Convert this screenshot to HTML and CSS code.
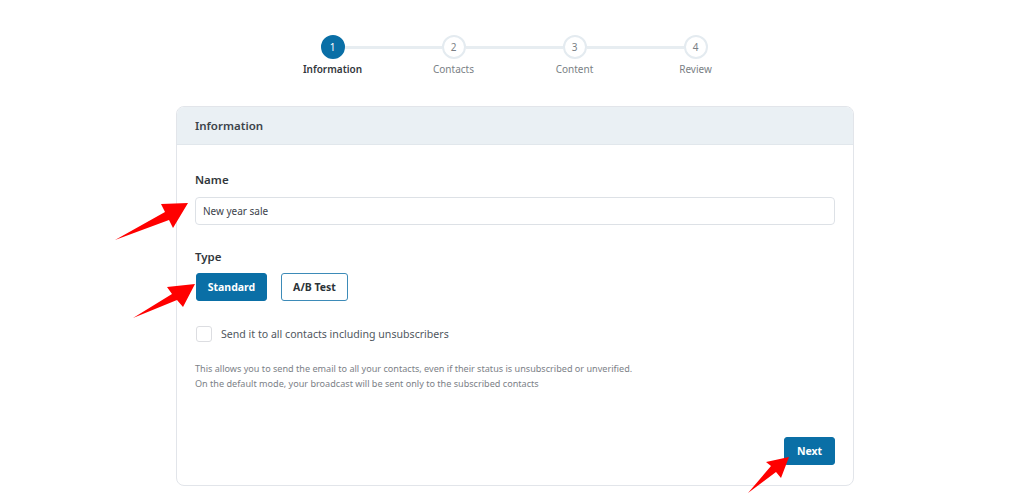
FILE: index.html
```html
<!DOCTYPE html>
<html lang="en">
<head>
<meta charset="utf-8">
<title>New broadcast</title>
<link rel="stylesheet" href="styles.css">
</head>
<body>
<div class="page">
  <ol class="steps">
    <li class="step active"><span class="dot">1</span><span class="step-label">Information</span></li>
    <li class="step"><span class="dot">2</span><span class="step-label">Contacts</span></li>
    <li class="step"><span class="dot">3</span><span class="step-label">Content</span></li>
    <li class="step"><span class="dot">4</span><span class="step-label">Review</span></li>
  </ol>

  <section class="card">
    <header class="card-head">Information</header>
    <div class="card-body">
      <label class="field-label">Name</label>
      <div class="input">New year sale</div>

      <div class="field-label type-label">Type</div>
      <div class="type-buttons">
        <button class="btn btn-primary">Standard</button>
        <button class="btn btn-outline">A/B Test</button>
      </div>

      <div class="check-row">
        <span class="checkbox"></span>
        <span class="check-label">Send it to all contacts including unsubscribers</span>
      </div>

      <p class="help">This allows you to send the email to all your contacts, even if their status is unsubscribed or unverified.<br>On the default mode, your broadcast will be sent only to the subscribed contacts</p>

      <div class="actions">
        <button class="btn btn-primary btn-next">Next</button>
      </div>
    </div>
  </section>

  <svg class="arrows" width="1024" height="493" viewBox="0 0 1024 493" aria-hidden="true">
    <polygon fill="#ff0000" points="115,240 165,212 161,204 188,203 173,228 169,220"/>
    <polygon fill="#ff0000" points="133,318 172,294 167,287 195,284 183,307 177,300"/>
    <polygon fill="#ff0000" points="748,493 771,466 766,462 789,457 781,478 776,472"/>
  </svg>
</div>
</body>
</html>
```

FILE: styles.css
```css
* { box-sizing: border-box; }

html, body {
  margin: 0;
  padding: 0;
  background: #ffffff;
}

body {
  font-family: "Noto Sans", "Open Sans", sans-serif;
  color: #3c434a;
  overflow: hidden;
}

.page {
  position: relative;
  width: 1024px;
  height: 493px;
  padding-top: 35px;
}

/* Stepper */
.steps {
  list-style: none;
  margin: 0 0 0 272px;
  padding: 0;
  display: flex;
  width: 484px;
}

.step {
  position: relative;
  width: 121px;
  display: flex;
  flex-direction: column;
  align-items: center;
}

.step + .step::before {
  content: "";
  position: absolute;
  top: 11px;
  left: calc(-50% + 12px);
  width: calc(100% - 24px);
  height: 3px;
  background: #e7edf1;
}

.dot {
  width: 24px;
  height: 24px;
  border-radius: 50%;
  border: 2px solid #e4ebf0;
  background: #fff;
  color: #7a7f85;
  font-size: 10px;
  line-height: 20px;
  text-align: center;
}

.step.active .dot {
  background: #0a6fa6;
  border-color: #0a6fa6;
  color: #fff;
}

.step-label {
  margin-top: 3px;
  font-size: 10px;
  line-height: 14px;
  color: #7a7f85;
  white-space: nowrap;
}

.step.active .step-label {
  color: #32373c;
  font-weight: 600;
}

/* Card */
.card {
  margin: 30px 0 0 176px;
  width: 678px;
  border: 1px solid #e2e5ea;
  border-radius: 8px;
  overflow: hidden;
  background: #fff;
}

.card-head {
  height: 38px;
  padding: 0 18px;
  background: #eaf0f4;
  border-bottom: 1px solid #e1e7ec;
  display: flex;
  align-items: center;
  font-size: 11.5px;
  font-weight: 600;
  color: #3c434a;
}

.card-body {
  padding: 27px 18px 20px 18px;
}

.field-label {
  display: block;
  font-size: 11.5px;
  font-weight: 600;
  line-height: 16px;
  color: #32373c;
}

.input {
  margin-top: 9px;
  height: 28px;
  border: 1px solid #dde1e6;
  border-radius: 4px;
  padding: 0 7px;
  display: flex;
  align-items: center;
  font-size: 10px;
  color: #3c434a;
}

.type-label {
  margin-top: 24px;
}

.type-buttons {
  margin-top: 8px;
  display: flex;
  gap: 14px;
  padding-left: 1px;
}

.btn {
  height: 28px;
  border-radius: 3px;
  font-family: inherit;
  font-size: 10.5px;
  font-weight: 700;
  padding: 0;
  cursor: pointer;
}

.btn-primary {
  background: #0a6fa6;
  border: 1px solid #0a6fa6;
  color: #fff;
  width: 71px;
}

.btn-outline {
  background: #fff;
  border: 1px solid #3d8bb8;
  color: #2c3338;
  width: 67px;
}

.check-row {
  margin-top: 25px;
  display: flex;
  align-items: center;
  padding-left: 1px;
}

.checkbox {
  width: 16px;
  height: 16px;
  border: 1px solid #dcdde1;
  border-radius: 3px;
  background: #fff;
}

.check-label {
  margin-left: 9px;
  font-size: 10.6px;
  color: #50575e;
}

.help {
  margin: 19px 0 0 0;
  font-size: 9.1px;
  line-height: 15px;
  color: #7c8187;
}

.actions {
  margin-top: 46px;
  display: flex;
  justify-content: flex-end;
}

.btn-next {
  width: 51px;
}

/* Annotation arrows overlay */
.arrows {
  position: absolute;
  left: 0;
  top: 0;
  pointer-events: none;
}
```
